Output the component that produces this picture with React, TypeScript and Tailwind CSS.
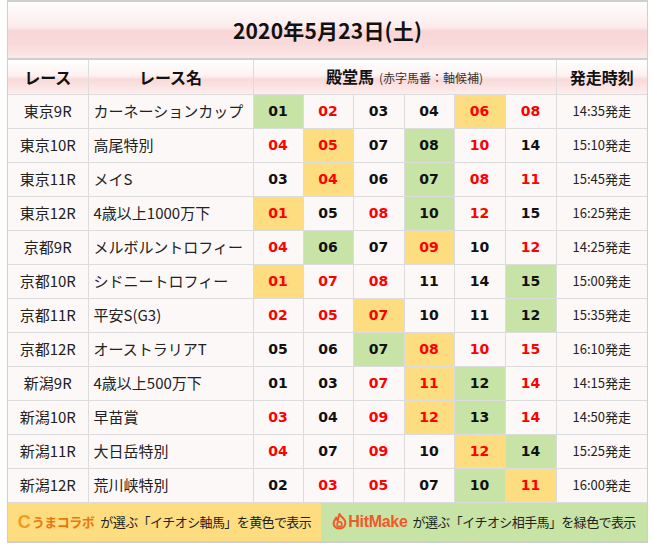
import type { ReactNode } from 'react'

type Pick = [string, 'r' | 'k', 'g' | 'y' | '-']

interface Race {
  venue: string
  name: string
  picks: Pick[]
  time: string
}

const races: Race[] = [
  { venue: '東京9R', name: 'カーネーションカップ', time: '14:35', picks: [['01', 'k', 'g'], ['02', 'r', '-'], ['03', 'k', '-'], ['04', 'k', '-'], ['06', 'r', 'y'], ['08', 'r', '-']] },
  { venue: '東京10R', name: '高尾特別', time: '15:10', picks: [['04', 'r', '-'], ['05', 'r', 'y'], ['07', 'k', '-'], ['08', 'k', 'g'], ['10', 'r', '-'], ['14', 'k', '-']] },
  { venue: '東京11R', name: 'メイS', time: '15:45', picks: [['03', 'k', '-'], ['04', 'r', 'y'], ['06', 'k', '-'], ['07', 'k', 'g'], ['08', 'r', '-'], ['11', 'r', '-']] },
  { venue: '東京12R', name: '4歳以上1000万下', time: '16:25', picks: [['01', 'r', 'y'], ['05', 'k', '-'], ['08', 'r', '-'], ['10', 'k', 'g'], ['12', 'r', '-'], ['15', 'k', '-']] },
  { venue: '京都9R', name: 'メルボルントロフィー', time: '14:25', picks: [['04', 'r', '-'], ['06', 'k', 'g'], ['07', 'k', '-'], ['09', 'r', 'y'], ['10', 'k', '-'], ['12', 'r', '-']] },
  { venue: '京都10R', name: 'シドニートロフィー', time: '15:00', picks: [['01', 'r', 'y'], ['07', 'r', '-'], ['08', 'r', '-'], ['11', 'k', '-'], ['14', 'k', '-'], ['15', 'k', 'g']] },
  { venue: '京都11R', name: '平安S(G3)', time: '15:35', picks: [['02', 'r', '-'], ['05', 'r', '-'], ['07', 'r', 'y'], ['10', 'k', '-'], ['11', 'k', '-'], ['12', 'k', 'g']] },
  { venue: '京都12R', name: 'オーストラリアT', time: '16:10', picks: [['05', 'k', '-'], ['06', 'k', '-'], ['07', 'k', 'g'], ['08', 'r', 'y'], ['10', 'r', '-'], ['15', 'r', '-']] },
  { venue: '新潟9R', name: '4歳以上500万下', time: '14:15', picks: [['01', 'k', '-'], ['03', 'k', '-'], ['07', 'r', '-'], ['11', 'r', 'y'], ['12', 'k', 'g'], ['14', 'r', '-']] },
  { venue: '新潟10R', name: '早苗賞', time: '14:50', picks: [['03', 'r', '-'], ['04', 'k', '-'], ['09', 'r', '-'], ['12', 'r', 'y'], ['13', 'k', 'g'], ['14', 'r', '-']] },
  { venue: '新潟11R', name: '大日岳特別', time: '15:25', picks: [['04', 'r', '-'], ['07', 'k', '-'], ['09', 'r', '-'], ['10', 'k', '-'], ['12', 'r', 'y'], ['14', 'k', 'g']] },
  { venue: '新潟12R', name: '荒川峡特別', time: '16:00', picks: [['02', 'k', '-'], ['03', 'r', '-'], ['05', 'r', '-'], ['07', 'k', '-'], ['10', 'k', 'g'], ['11', 'r', 'y']] },
]

const bgClass = {
  g: 'bg-[#c8e3a6]',
  y: 'bg-[#fedc80]',
  '-': 'bg-[#fdf8f8]',
}

const textClass = {
  r: 'text-[#ff0000]',
  k: 'text-[#111]',
}

const jp = "font-['Meiryo','Noto_Sans_CJK_JP',sans-serif]"

function Th({ children, className = '', colSpan }: { children: ReactNode; className?: string; colSpan?: number }) {
  return (
    <th
      colSpan={colSpan}
      className={`border border-[#dcdcdc] h-[34px] p-0 text-[16px] leading-[20px] font-bold text-[#111] whitespace-nowrap bg-[linear-gradient(180deg,#ffffff_0%,#fdf1f1_45%,#f9d9d9_58%,#fdeeee_100%)] ${className}`}
    >
      {children}
    </th>
  )
}

function FlameIcon() {
  return (
    <svg width="15" height="17" viewBox="0 0 15 17" className="mr-[1px] shrink-0">
      <path
        d="M7.5 1 C8.5 3.5 11 4.5 12.5 7 C14.5 10.5 12.5 15.6 7.5 15.6 C3 15.6 0.8 12 2 8.6 C2.6 7 3.6 6 4.2 4.6 C4.8 6 5 7 5.8 7.6 C6.2 5.2 6.6 3 7.5 1 Z"
        fill="none"
        stroke="#ef5a28"
        strokeWidth="2"
        strokeLinejoin="round"
      />
      <circle cx="7.5" cy="11.2" r="2.4" fill="none" stroke="#ef5a28" strokeWidth="1.6" />
    </svg>
  )
}

export default function App() {
  return (
    <div className={`bg-white w-[654px] h-[548px] pl-[7px] ${jp}`}>
      <div className="w-[641px] border-x border-t-2 border-b-2 border-[#cfcfcf]">
        {/* タイトル */}
        <div className="h-[58px] flex items-center justify-center border-b-2 border-[#cfcfcf] bg-[linear-gradient(180deg,#fffdfd_0%,#fcecec_45%,#f8d6d6_52%,#f9dada_75%,#fce8e8_100%)]">
          <h2 className="text-[21px] leading-none font-bold text-[#111] tracking-[0.2px]">2020年5月23日(土)</h2>
        </div>

        <table className="w-full table-fixed border-collapse">
          <colgroup>
            <col className="w-[80px]" />
            <col className="w-[165px]" />
            <col className="w-[50px]" />
            <col className="w-[50px]" />
            <col className="w-[51px]" />
            <col className="w-[50px]" />
            <col className="w-[51px]" />
            <col className="w-[51px]" />
            <col className="w-[91px]" />
          </colgroup>
          <thead>
            <tr>
              <Th className="border-t-0 border-l-0">レース</Th>
              <Th className="border-t-0">レース名</Th>
              <Th className="border-t-0" colSpan={6}>
                殿堂馬
                <span className="ml-[5px] text-[12px] font-normal text-[#333]">(赤字馬番：軸候補)</span>
              </Th>
              <Th className="border-t-0 border-r-0">発走時刻</Th>
            </tr>
          </thead>
          <tbody>
            {races.map((race) => (
              <tr key={race.venue} className="bg-[#fdf8f8]">
                <td className="border border-l-0 border-[#dcdcdc] h-[34px] p-0 text-center text-[15px] leading-[20px] text-[#222]">
                  {race.venue}
                </td>
                <td className="border border-[#dcdcdc] p-0 pl-[5px] text-left text-[15px] leading-[20px] text-[#222] whitespace-nowrap">
                  {race.name}
                </td>
                {race.picks.map(([num, color, bg], i) => (
                  <td
                    key={i}
                    className={`border border-[#dcdcdc] p-0 text-center text-[14px] leading-[20px] font-bold font-['DejaVu_Sans',Verdana,sans-serif] ${bgClass[bg]} ${textClass[color]}`}
                  >
                    {num}
                  </td>
                ))}
                <td className="border border-r-0 border-[#dcdcdc] p-0 text-center text-[13px] leading-[20px] text-[#222]">
                  {race.time}発走
                </td>
              </tr>
            ))}
          </tbody>
        </table>

        {/* 凡例 */}
        <div className="flex h-[38px] text-[13px] leading-[20px] text-[#222] whitespace-nowrap">
          <div className="w-[313px] shrink-0 bg-[#fedc80] flex items-center justify-center">
            <span className="font-['Liberation_Sans',Arial,sans-serif] font-bold text-[18px] leading-none text-[#f29a1f] mr-[1px]">C</span>
            <span className="font-bold text-[13px] text-[#e8770f] tracking-[-0.5px] mr-[6px]">うまコラボ</span>
            <span className="tracking-[-0.6px]">が選ぶ「イチオシ軸馬」を黄色で表示</span>
          </div>
          <div className="flex-1 bg-[#c8e3a6] flex items-center justify-center">
            <FlameIcon />
            <span className="font-['Liberation_Sans',Arial,sans-serif] font-bold text-[16px] text-[#ef5a28] tracking-[-0.3px] mr-[5px]">HitMake</span>
            <span className="tracking-[-0.6px]">が選ぶ「イチオシ相手馬」を緑色で表示</span>
          </div>
        </div>
      </div>
    </div>
  )
}
